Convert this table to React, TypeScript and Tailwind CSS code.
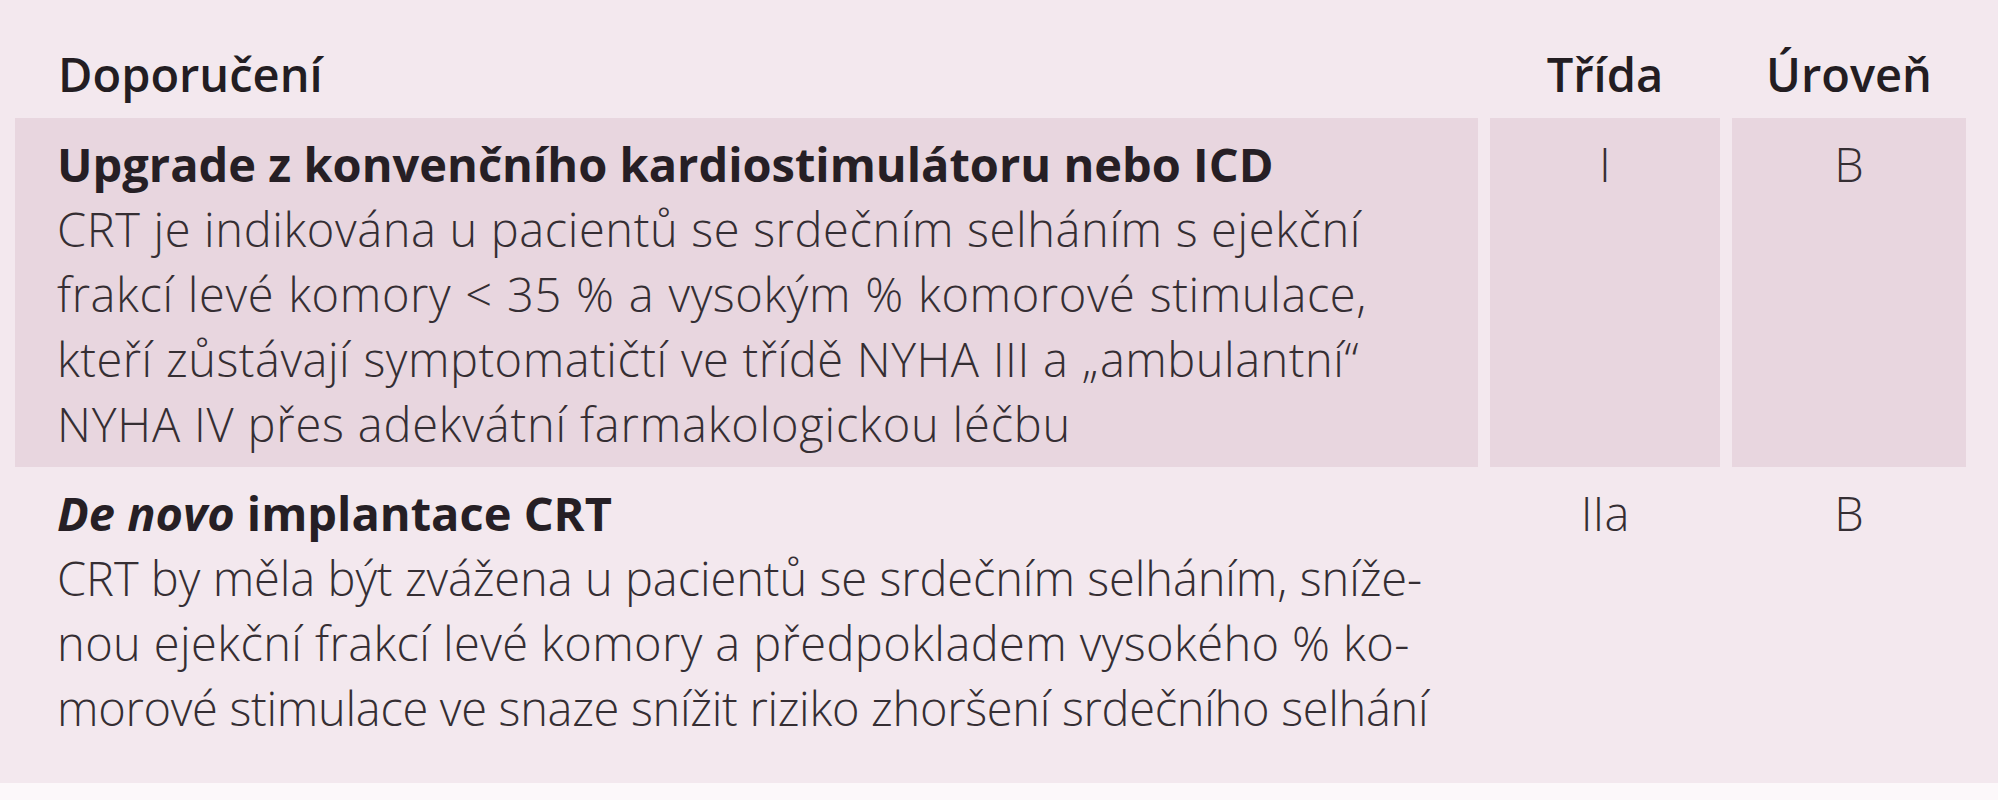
import React from "react";

const font = { fontFamily: '"Open Sans", "Noto Sans", sans-serif' };

function Line({ children, cls }: { children: React.ReactNode; cls: string }) {
  return <div className={"whitespace-nowrap " + cls}>{children}</div>;
}

const J = "text-justify [text-align-last:justify]";

export default function App() {
  return (
    <div
      className="w-[1998px] h-[800px] bg-[#fcf8fa] text-[47px] leading-[65px] font-light text-[#352e33]"
      style={font}
    >
      <div className="h-[783px] bg-[#f3e8ee] pl-[15px]">
        <div className="grid grid-cols-[1463px_230px_234px] gap-x-[12px]">
          {/* header */}
          <div className="pl-[43px] pt-[42px] pb-[11px] font-semibold text-[#231d22]">
            Doporučení
          </div>
          <div className="pt-[42px] pb-[11px] text-center font-semibold text-[#231d22]">
            Třída
          </div>
          <div className="pt-[42px] pb-[11px] text-center font-semibold text-[#231d22]">
            Úroveň
          </div>

          {/* row 1 */}
          <div className="bg-[#e8d6df] pl-[42px] pt-[14px] pb-[10px]">
            <div className="whitespace-nowrap font-bold text-[#261f25]">
              Upgrade z konvenčního kardiostimulátoru nebo ICD
            </div>
            <Line cls={"w-[1304px] tracking-[0.6px] " + J}>
              CRT je indikována u pacientů se srdečním selháním s ejekční
            </Line>
            <Line cls={"w-[1310px] tracking-[0.6px] " + J}>
              frakcí levé komory &lt; 35 % a vysokým % komorové stimulace,
            </Line>
            <Line cls={"w-[1302px] tracking-[0.5px] " + J}>
              kteří zůstávají symptomatičtí ve třídě NYHA III a „ambulantní“
            </Line>
            <Line cls="tracking-[0.8px]">
              NYHA IV přes adekvátní farmakologickou léčbu
            </Line>
          </div>
          <div className="bg-[#e8d6df] pt-[14px] text-center">I</div>
          <div className="bg-[#e8d6df] pt-[14px] text-center">B</div>

          {/* row 2 */}
          <div className="pl-[42px] pt-[14px]">
            <div className="whitespace-nowrap font-bold text-[#261f25]">
              <span className="italic">De novo</span> implantace CRT
            </div>
            <Line cls={"w-[1365px] tracking-[-0.1px] " + J}>
              CRT by měla být zvážena u pacientů se srdečním selháním, sníže-
            </Line>
            <Line cls={"w-[1333px] tracking-[0.4px] " + J}>
              nou ejekční frakcí levé komory a předpokladem vysokého % ko-
            </Line>
            <Line cls={"w-[1370px] tracking-[-0.3px] " + J}>
              morové stimulace ve snaze snížit riziko zhoršení srdečního selhání
            </Line>
          </div>
          <div className="pt-[14px] text-center">IIa</div>
          <div className="pt-[14px] text-center">B</div>
        </div>
      </div>
    </div>
  );
}
